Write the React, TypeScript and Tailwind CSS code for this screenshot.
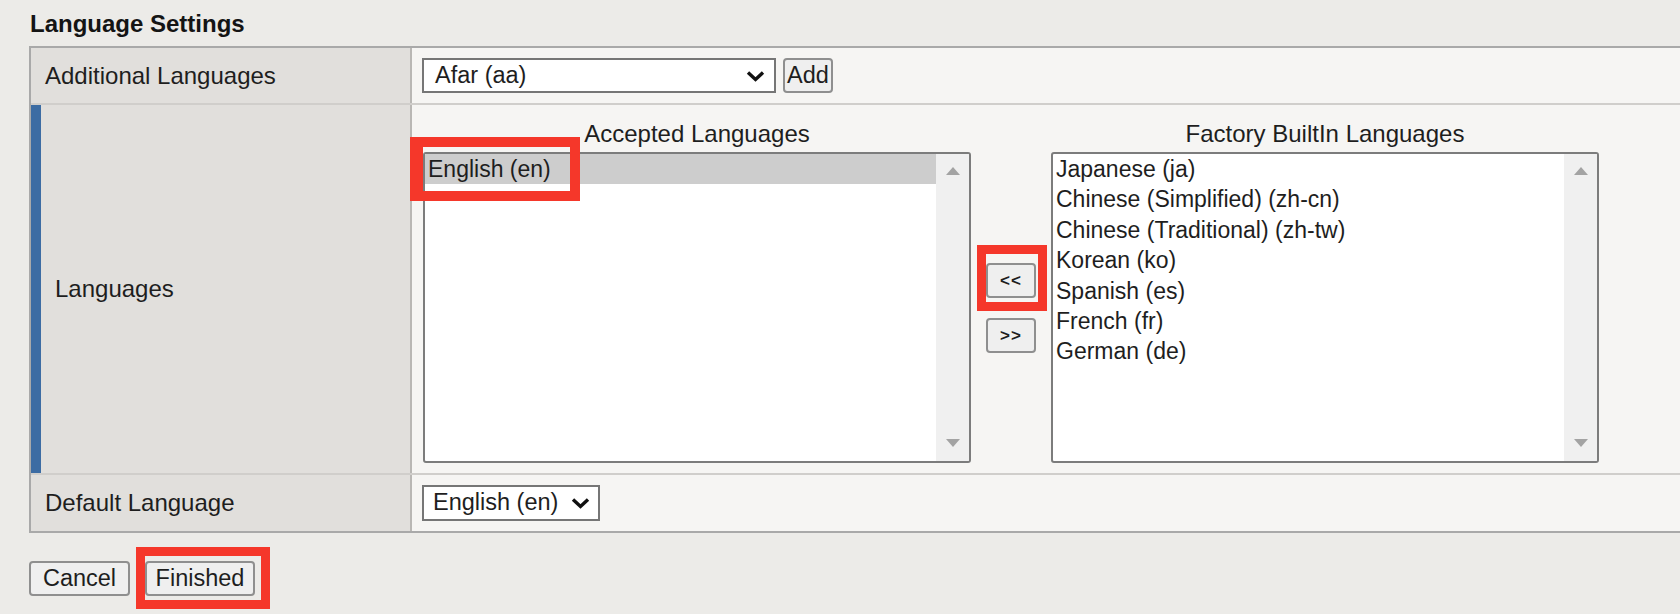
import * as React from 'react';

const accepted = ['English (en)'];
const factory = [
  'Japanese (ja)',
  'Chinese (Simplified) (zh-cn)',
  'Chinese (Traditional) (zh-tw)',
  'Korean (ko)',
  'Spanish (es)',
  'French (fr)',
  'German (de)',
];

const Chevron: React.FC = () => (
  <svg width="19" height="12" viewBox="0 0 19 12">
    <polyline points="2,2.5 9.5,9.5 17,2.5" fill="none" stroke="#111" strokeWidth="3.4" />
  </svg>
);

const Scrollbar: React.FC = () => (
  <div className="w-[33px] bg-[#f0f0f0] flex flex-col items-center justify-between pt-[13px] pb-[14px]">
    <svg width="14" height="8" viewBox="0 0 14 8">
      <polygon points="7,0 14,8 0,8" fill="#a3a3a3" />
    </svg>
    <svg width="14" height="8" viewBox="0 0 14 8">
      <polygon points="0,0 14,0 7,8" fill="#a3a3a3" />
    </svg>
  </div>
);

interface ListBoxProps {
  title: string;
  items: string[];
  selected?: number;
}

const ListBox: React.FC<ListBoxProps> = ({ title, items, selected }) => (
  <div className="flex flex-col w-[548px]">
    <div className="text-center leading-[26px] h-[26px]">{title}</div>
    <div className="mt-[5px] h-[311px] border-2 border-[#7c7c7c] rounded-[3px] bg-white flex overflow-hidden text-[23px]">
      <div className="flex-1">
        {items.map((item, i) => (
          <div
            key={item}
            className={
              'h-[30.4px] leading-[30.4px] pl-[3px] whitespace-nowrap ' +
              (i === selected ? 'bg-[#cdcdcd]' : '')
            }
          >
            {item}
          </div>
        ))}
      </div>
      <Scrollbar />
    </div>
  </div>
);

const SmallButton: React.FC<{ label: string; className?: string }> = ({ label, className }) => (
  <button
    className={
      'h-[35px] border-2 border-[#8f8f8f] rounded-[4px] bg-[#efefef] flex items-center justify-center leading-none ' +
      (className || '')
    }
  >
    {label}
  </button>
);

export default function App() {
  return (
    <div className="relative w-[1680px] h-[614px] overflow-hidden bg-[#ecebe8] text-[#1e1e1e] text-[24px] font-['Liberation_Sans',Arial,sans-serif]">
      <div className="h-[46px] pl-[30px] pt-[11px] leading-[26px] font-bold text-[#141414]">Language Settings</div>

      <div className="ml-[29px] w-[1700px] border-2 border-[#a9a9a9]">
        {/* additional languages */}
        <div className="flex h-[57px] border-b-2 border-[#d0cecb]">
          <div className="w-[381px] shrink-0 border-r-2 border-[#b9b7b4] bg-[#e1dfdc] flex items-center pl-[14px]">
            Additional Languages
          </div>
          <div className="flex-1 bg-[#f6f5f3] flex items-center pl-[10px] text-[23.5px]">
            <div className="w-[354px] h-[35px] border-2 border-[#767676] bg-white flex items-center justify-between pl-[11px] pr-[9px]">
              <span>Afar (aa)</span>
              <Chevron />
            </div>
            <SmallButton label="Add" className="ml-[7px] w-[50px]" />
          </div>
        </div>

        {/* languages */}
        <div className="flex h-[370px] border-b-2 border-[#d0cecb]">
          <div className="w-[381px] shrink-0 border-l-[10px] border-l-[#3c6ca3] border-r-2 border-r-[#b9b7b4] bg-[#e1dfdc] flex items-center pl-[14px]">
            Languages
          </div>
          <div className="flex-1 bg-[#f6f5f3] flex pl-[11px] pt-[16px]">
            <ListBox title="Accepted Languages" items={accepted} selected={0} />
            <div className="w-[80px] mt-[31px] h-[311px] flex flex-col items-center justify-center gap-[20px]">
              <SmallButton label="<<" className="w-[50px] h-[34px] text-[17px] font-bold tracking-[1px]" />
              <SmallButton label=">>" className="w-[50px] h-[34px] text-[17px] font-bold tracking-[1px]" />
            </div>
            <ListBox title="Factory BuiltIn Languages" items={factory} />
          </div>
        </div>

        {/* default language */}
        <div className="flex h-[56px]">
          <div className="w-[381px] shrink-0 border-r-2 border-[#b9b7b4] bg-[#e1dfdc] flex items-center pl-[14px]">
            Default Language
          </div>
          <div className="flex-1 bg-[#f6f5f3] flex items-center pl-[10px] text-[23.5px]">
            <div className="w-[178px] h-[36px] border-2 border-[#767676] bg-white flex items-center justify-between pl-[9px] pr-[8px]">
              <span>English (en)</span>
              <Chevron />
            </div>
          </div>
        </div>
      </div>

      <div className="flex gap-[15px] ml-[29px] mt-[28px] text-[23.5px]">
        <SmallButton label="Cancel" className="w-[101px]" />
        <SmallButton label="Finished" className="w-[110px]" />
      </div>

      {/* annotation boxes */}
      <div className="absolute left-[410px] top-[137px] w-[170px] h-[64px] border-[10px] border-l-[13px] border-[#f5372a]" />
      <div className="absolute left-[977px] top-[245px] w-[70px] h-[66px] border-[9px] border-[#f5372a]" />
      <div className="absolute left-[136px] top-[547px] w-[134px] h-[62px] border-[9px] border-[#f5372a]" />
    </div>
  );
}
